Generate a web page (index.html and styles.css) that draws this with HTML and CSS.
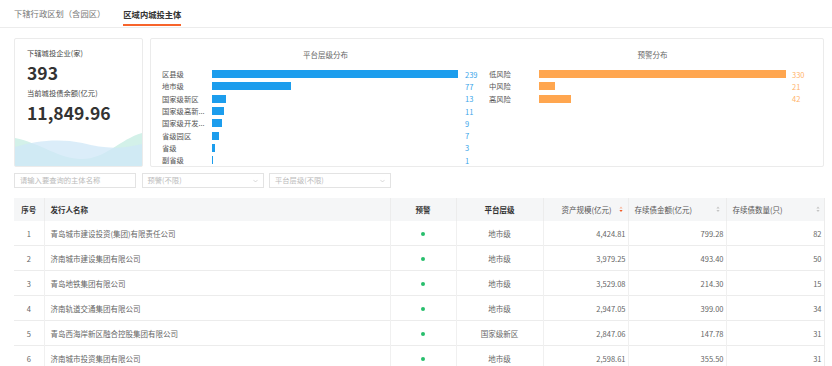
FILE: index.html
```html
<!DOCTYPE html>
<html lang="zh-CN">
<head>
  <meta charset="UTF-8">
  <title>区域内城投主体</title>
  <link rel="stylesheet" href="styles.css">
</head>
<body>
  <div class="page">
    <div class="tabs">
      <div class="tab">下辖行政区划（含园区）</div>
      <div class="tab active">区域内城投主体</div>
    </div>

    <div class="cards">
      <div class="summary">
        <div class="sum-label">下辖城投企业(家)</div>
        <div class="sum-num">393</div>
        <div class="sum-label">当前城投债余额(亿元)</div>
        <div class="sum-num big">11,849.96</div>
        <svg class="wave" viewBox="0 0 128 36" preserveAspectRatio="none">
          <path d="M0 8 C25 13 45 29 67 29 C92 29 106 9 128 3 L128 36 L0 36 Z" fill="#d3f1e9"/>
          <path d="M0 17 C20 11 44 8 68 13 C90 19 108 19 128 14 L128 36 L0 36 Z" fill="#cfe7f7" opacity="0.75"/>
        </svg>
      </div>

      <div class="charts">
        <div class="chart">
          <div class="chart-title">平台层级分布</div>
          <div class="bar-row"><span class="lbl">区县级</span><span class="track"><i class="bar blue" style="width:246px"></i></span><span class="val blue-t">239</span></div>
          <div class="bar-row"><span class="lbl">地市级</span><span class="track"><i class="bar blue" style="width:79px"></i></span><span class="val blue-t">77</span></div>
          <div class="bar-row"><span class="lbl">国家级新区</span><span class="track"><i class="bar blue" style="width:14px"></i></span><span class="val blue-t">13</span></div>
          <div class="bar-row"><span class="lbl">国家级高新...</span><span class="track"><i class="bar blue" style="width:12px"></i></span><span class="val blue-t">11</span></div>
          <div class="bar-row"><span class="lbl">国家级开发...</span><span class="track"><i class="bar blue" style="width:10px"></i></span><span class="val blue-t">9</span></div>
          <div class="bar-row"><span class="lbl">省级园区</span><span class="track"><i class="bar blue" style="width:7px"></i></span><span class="val blue-t">7</span></div>
          <div class="bar-row"><span class="lbl">省级</span><span class="track"><i class="bar blue" style="width:3px"></i></span><span class="val blue-t">3</span></div>
          <div class="bar-row"><span class="lbl">副省级</span><span class="track"><i class="bar blue" style="width:1.3px"></i></span><span class="val blue-t">1</span></div>
        </div>
        <div class="chart">
          <div class="chart-title">预警分布</div>
          <div class="bar-row"><span class="lbl">低风险</span><span class="track"><i class="bar orange" style="width:247px"></i></span><span class="val orange-t">330</span></div>
          <div class="bar-row"><span class="lbl">中风险</span><span class="track"><i class="bar orange" style="width:16px"></i></span><span class="val orange-t">21</span></div>
          <div class="bar-row"><span class="lbl">高风险</span><span class="track"><i class="bar orange" style="width:32px"></i></span><span class="val orange-t">42</span></div>
        </div>
      </div>
    </div>

    <div class="filters">
      <div class="field">请输入要查询的主体名称</div>
      <div class="field select">预警(不限)<svg viewBox="0 0 6 4"><path d="M0.5 0.7 L3 3.2 L5.5 0.7" fill="none" stroke="#c0c0c0" stroke-width="0.7"/></svg></div>
      <div class="field select">平台层级(不限)<svg viewBox="0 0 6 4"><path d="M0.5 0.7 L3 3.2 L5.5 0.7" fill="none" stroke="#c0c0c0" stroke-width="0.7"/></svg></div>
    </div>

    <table class="grid">
      <colgroup>
        <col style="width:30px"><col style="width:346px"><col style="width:66px"><col style="width:87px"><col style="width:85px"><col style="width:98px"><col style="width:98px">
      </colgroup>
      <thead>
        <tr>
          <th class="c">序号</th>
          <th>发行人名称</th>
          <th class="c">预警</th>
          <th class="c">平台层级</th>
          <th><div class="sort end">资产规模(亿元)<svg class="arrows" viewBox="0 0 5 8"><path d="M2.5 0.5 L4.5 3 L0.5 3 Z" fill="#f7b49a"/><path d="M2.5 7.5 L4.5 5 L0.5 5 Z" fill="#f35a24"/></svg></div></th>
          <th><div class="sort">存续债金额(亿元)<svg class="arrows" viewBox="0 0 5 8"><path d="M2.5 0.5 L4.5 3 L0.5 3 Z" fill="#c4c4c4"/><path d="M2.5 7.5 L4.5 5 L0.5 5 Z" fill="#c4c4c4"/></svg></div></th>
          <th><div class="sort">存续债数量(只)<svg class="arrows" viewBox="0 0 5 8"><path d="M2.5 0.5 L4.5 3 L0.5 3 Z" fill="#c4c4c4"/><path d="M2.5 7.5 L4.5 5 L0.5 5 Z" fill="#c4c4c4"/></svg></div></th>
        </tr>
      </thead>
      <tbody>
        <tr><td class="c">1</td><td>青岛城市建设投资(集团)有限责任公司</td><td class="c"><i class="dot"></i></td><td class="c">地市级</td><td class="r">4,424.81</td><td class="r">799.28</td><td class="r">82</td></tr>
        <tr><td class="c">2</td><td>济南城市建设集团有限公司</td><td class="c"><i class="dot"></i></td><td class="c">地市级</td><td class="r">3,979.25</td><td class="r">493.40</td><td class="r">50</td></tr>
        <tr><td class="c">3</td><td>青岛地铁集团有限公司</td><td class="c"><i class="dot"></i></td><td class="c">地市级</td><td class="r">3,529.08</td><td class="r">214.30</td><td class="r">15</td></tr>
        <tr><td class="c">4</td><td>济南轨道交通集团有限公司</td><td class="c"><i class="dot"></i></td><td class="c">地市级</td><td class="r">2,947.05</td><td class="r">399.00</td><td class="r">34</td></tr>
        <tr><td class="c">5</td><td>青岛西海岸新区融合控股集团有限公司</td><td class="c"><i class="dot"></i></td><td class="c">国家级新区</td><td class="r">2,847.06</td><td class="r">147.78</td><td class="r">31</td></tr>
        <tr><td class="c">6</td><td>济南城市投资集团有限公司</td><td class="c"><i class="dot"></i></td><td class="c">地市级</td><td class="r">2,598.61</td><td class="r">355.50</td><td class="r">31</td></tr>
      </tbody>
    </table>
  </div>
</body>
</html>
```

FILE: styles.css
```css
body {
  margin: 0;
  background-color: #fff;
  font-family: "Noto Sans CJK SC", "Noto Sans", sans-serif;
  font-size: 7.5px;
  color: #666;
}
.page {
  padding: 0 8px 0 14px;
}
.tabs {
  display: flex;
  gap: 18px;
  height: 27px;
  border-bottom: 1px solid #ececec;
  margin-left: -14px;
  margin-right: -8px;
  padding-left: 14px;
}
.tab {
  font-size: 8.3px;
  line-height: 27px;
  color: #777;
  box-sizing: border-box;
  height: 27px;
}
.tab.active {
  color: #333;
  font-weight: bold;
  border-bottom: 2px solid #f7642b;
  height: 26px;
  line-height: 28px;
}

.cards {
  display: flex;
  gap: 7px;
  margin-top: 10px;
  height: 129px;
}
.summary {
  position: relative;
  width: 129px;
  box-sizing: border-box;
  border: 1px solid #ebebeb;
  border-radius: 2px;
  padding: 9px 12px;
  overflow: hidden;
}
.sum-label {
  font-size: 7.3px;
  color: #444;
  line-height: 10px;
}
.sum-num {
  font-size: 17.5px;
  font-weight: bold;
  color: #333;
  line-height: 24px;
  margin-top: 3px;
  margin-bottom: 3px;
}
.sum-num.big {
  font-size: 17.5px;
  line-height: 26px;
  margin-top: 2px;
}
.wave {
  position: absolute;
  left: 0;
  bottom: 0;
  width: 100%;
  height: 36px;
  display: block;
}

.charts {
  flex: 1;
  display: grid;
  grid-template-columns: 1fr 1fr;
  box-sizing: border-box;
  border: 1px solid #ebebeb;
  border-radius: 2px;
  padding: 11px 7px 0 11px;
}
.chart-title {
  text-align: center;
  line-height: 10px;
  color: #666;
  margin-bottom: 8px;
}
.bar-row {
  display: grid;
  grid-template-columns: 50px 253px auto;
  align-items: center;
  height: 12.3px;
}
.lbl {
  color: #555;
  font-size: 7.3px;
  white-space: nowrap;
}
.track {
  display: flex;
  align-items: center;
}
.bar {
  display: block;
  height: 8px;
}
.bar.blue {
  background-color: #1c9ded;
}
.bar.orange {
  background-color: #ffa64f;
}
.val {
  font-size: 7.5px;
}
.blue-t {
  color: #3aa5ea;
}
.orange-t {
  color: #ffb36b;
}

.filters {
  display: flex;
  gap: 5.5px;
  margin-top: 6px;
}
.field {
  width: 122px;
  height: 15px;
  box-sizing: border-box;
  border: 1px solid #e3e3e3;
  padding: 0 5px;
  line-height: 13px;
  color: #bbb;
  font-size: 7.3px;
  display: flex;
  align-items: center;
  justify-content: space-between;
}
.field svg {
  width: 5px;
  height: 4px;
}

.grid {
  width: 810px;
  margin-top: 10px;
  border-collapse: collapse;
  table-layout: fixed;
  border-right: 1px solid #ececec;
}
.grid th {
  height: 23px;
  padding: 0 6px;
  background-color: #f5f6f7;
  color: #333;
  font-weight: bold;
  text-align: left;
  border-left: 1px solid #ececec;
  white-space: nowrap;
}
.grid th:first-child,
.grid td:first-child {
  border-left: none;
}
.grid td {
  height: 24px;
  padding: 0 6px;
  border-left: 1px solid #f0f0f0;
  border-top: 1px solid #ececec;
  color: #666;
  white-space: nowrap;
}
.grid tbody tr:first-child td {
  border-top: none;
}
.grid .c {
  text-align: center;
  padding: 0;
}
.grid td.r {
  text-align: right;
  padding-right: 2px;
}
.sort {
  display: flex;
  align-items: center;
  justify-content: space-between;
  font-weight: normal;
  color: #555;
}
.sort.end {
  justify-content: flex-end;
  gap: 7px;
  margin-right: -1px;
}
.arrows {
  width: 4px;
  height: 6.5px;
}
.grid th:nth-child(7) .sort {
  margin-right: -2px;
}
.dot {
  display: inline-block;
  width: 4px;
  height: 4px;
  border-radius: 50%;
  background-color: #27be6c;
  vertical-align: middle;
}
```
